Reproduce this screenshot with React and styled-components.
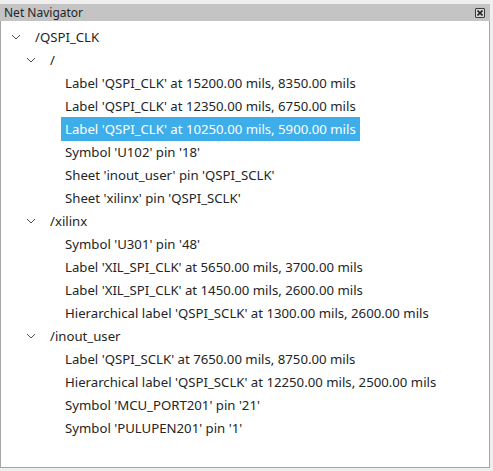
import React from 'react';
import styled, { createGlobalStyle } from 'styled-components';

const GlobalStyle = createGlobalStyle`
  html, body {
    margin: 0;
    padding: 0;
    background: #efefef;
  }
  body {
    font-family: "Noto Sans", "Open Sans", sans-serif;
    color: #232627;
  }
`;

// styling
const Dock = styled.div`
  width: 490px;
  height: 471px;
  padding-top: 4px;
  box-sizing: border-box;
  display: flex;
  flex-direction: column;
`;

const TitleBar = styled.div`
  height: 17px;
  background: #c4c4c4;
  display: flex;
  align-items: center;
  justify-content: space-between;
  padding: 0 5px 0 4px;
  font-size: 12px;
  color: #232627;
`;

const CloseBox = styled.div`
  width: 8px;
  height: 8px;
  border: 1px solid #3a3a3a;
  border-radius: 1px;
  display: flex;
  align-items: center;
  justify-content: center;
  background: #d6d6d6;
`;

const Panel = styled.div`
  flex: 1;
  margin-bottom: 3px;
  background: #fff;
  border: 1px solid #a5a5a5;
  border-top: none;
  padding-top: 4px;
`;

const Row = styled.div`
  height: 23px;
  display: flex;
  align-items: center;
  padding-left: ${p => 5 + p.$level * 15}px;
  font-size: 13.2px;
  white-space: nowrap;
`;

const Expander = styled.span`
  width: 20px;
  height: 23px;
  display: flex;
  align-items: center;
  justify-content: center;
  flex-shrink: 0;
`;

const Label = styled.span`
  margin-left: 5px;
  padding: 2px 4px;
  line-height: 20px;
  background: ${p => (p.$selected ? '#3daee9' : 'transparent')};
  color: ${p => (p.$selected ? '#fff' : '#232627')};
`;

const tree = [
  { level: 0, text: '/QSPI_CLK', open: true },
  { level: 1, text: '/', open: true },
  { level: 2, text: "Label 'QSPI_CLK' at 15200.00 mils, 8350.00 mils" },
  { level: 2, text: "Label 'QSPI_CLK' at 12350.00 mils, 6750.00 mils" },
  { level: 2, text: "Label 'QSPI_CLK' at 10250.00 mils, 5900.00 mils", selected: true },
  { level: 2, text: "Symbol 'U102' pin '18'" },
  { level: 2, text: "Sheet 'inout_user' pin 'QSPI_SCLK'" },
  { level: 2, text: "Sheet 'xilinx' pin 'QSPI_SCLK'" },
  { level: 1, text: '/xilinx', open: true },
  { level: 2, text: "Symbol 'U301' pin '48'" },
  { level: 2, text: "Label 'XIL_SPI_CLK' at 5650.00 mils, 3700.00 mils" },
  { level: 2, text: "Label 'XIL_SPI_CLK' at 1450.00 mils, 2600.00 mils" },
  { level: 2, text: "Hierarchical label 'QSPI_SCLK' at 1300.00 mils, 2600.00 mils" },
  { level: 1, text: '/inout_user', open: true },
  { level: 2, text: "Label 'QSPI_SCLK' at 7650.00 mils, 8750.00 mils" },
  { level: 2, text: "Hierarchical label 'QSPI_SCLK' at 12250.00 mils, 2500.00 mils" },
  { level: 2, text: "Symbol 'MCU_PORT201' pin '21'" },
  { level: 2, text: "Symbol 'PULUPEN201' pin '1'" },
];

const Chevron = () => (
  <svg width="10" height="6" viewBox="0 0 10 6">
    <path d="M1 1 L5 5 L9 1" fill="none" stroke="#4d4f50" strokeWidth="1" />
  </svg>
);

const App = () => {
  return (
    <>
      <GlobalStyle />
      <Dock>
        <TitleBar>
          <span>Net Navigator</span>
          <CloseBox>
            <svg width="6" height="6" viewBox="0 0 6 6">
              <path d="M0.5 0.5 L5.5 5.5 M5.5 0.5 L0.5 5.5" stroke="#232627" strokeWidth="1.6" />
            </svg>
          </CloseBox>
        </TitleBar>
        <Panel>
          {tree.map((item, i) => (
            <Row key={i} $level={item.level}>
              <Expander>{item.open && <Chevron />}</Expander>
              <Label $selected={item.selected}>{item.text}</Label>
            </Row>
          ))}
        </Panel>
      </Dock>
    </>
  );
};

export default App;
